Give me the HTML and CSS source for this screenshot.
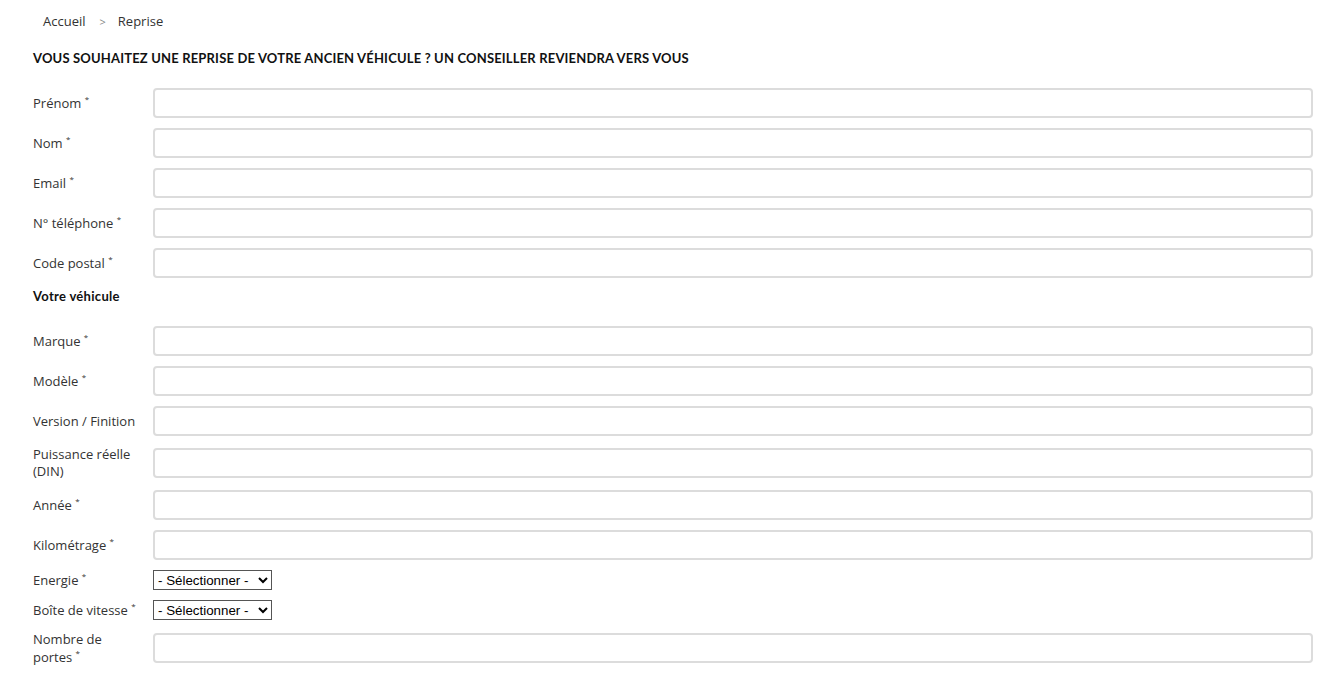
FILE: index.html
```html
<!DOCTYPE html>
<html>

<head>
    <meta charset="UTF-8">
    <meta name="viewport" content="width=device-width, initial-scale=1.0">
    <title>Reprise</title>
    <link rel="stylesheet" href="styles.css">
</head>

<body>
    <ul class="breadcrumb">
        <li><a href="#">Accueil</a></li>
        <li class="sep">&gt;</li>
        <li>Reprise</li>
    </ul>
    <form class="reprise">
        <h1>Vous souhaitez une reprise de votre ancien véhicule ? Un conseiller reviendra vers vous</h1>
        <div class="row"><label>Prénom <sup>*</sup></label><input type="text"></div>
        <div class="row"><label>Nom <sup>*</sup></label><input type="text"></div>
        <div class="row"><label>Email <sup>*</sup></label><input type="email"></div>
        <div class="row"><label>N° téléphone <sup>*</sup></label><input type="tel"></div>
        <div class="row"><label>Code postal <sup>*</sup></label><input type="text"></div>
        <h2>Votre véhicule</h2>
        <div class="row"><label>Marque <sup>*</sup></label><input type="text"></div>
        <div class="row"><label>Modèle <sup>*</sup></label><input type="text"></div>
        <div class="row"><label>Version / Finition</label><input type="text"></div>
        <div class="row"><label>Puissance réelle<br>(DIN)</label><input type="text"></div>
        <div class="row"><label>Année <sup>*</sup></label><input type="text"></div>
        <div class="row"><label>Kilométrage <sup>*</sup></label><input type="text"></div>
        <div class="row"><label>Energie <sup>*</sup></label>
            <select><option>- Sélectionner -</option></select></div>
        <div class="row"><label>Boîte de vitesse <sup>*</sup></label>
            <select><option>- Sélectionner -</option></select></div>
        <div class="row"><label class="tall">Nombre de<br>portes <sup>*</sup></label><input type="text"></div>
    </form>
</body>

</html>
```

FILE: styles.css
```css
* {
    margin: 0;
    padding: 0;
    box-sizing: border-box;
}

body {
    font-family: "Open Sans", "Liberation Sans", sans-serif;
    font-size: 13px;
    color: #333;
    background: white;
}

.breadcrumb {
    list-style-type: none;
    display: flex;
    padding: 13px 0 0 43px;
    line-height: 17px;
    height: 50px;
}

.breadcrumb a {
    color: #333;
    text-decoration: none;
}

.breadcrumb .sep {
    font-size: 11px;
    color: #888;
    padding: 0 12px 0 14px;
}

.reprise {
    padding: 0 31px 0 33px;
}

h1 {
    font-family: "Lato", "Liberation Sans", sans-serif;
    font-size: 13px;
    font-weight: bold;
    letter-spacing: 0.17px;
    text-transform: uppercase;
    color: #111;
    line-height: 17px;
    margin-bottom: 21px;
}

h2 {
    font-family: "Lato", "Liberation Sans", sans-serif;
    font-size: 13px;
    font-weight: bold;
    letter-spacing: 0.3px;
    color: #111;
    line-height: 17px;
    margin-bottom: 21px;
}

.row {
    display: flex;
    align-items: center;
    margin-bottom: 10px;
}

.row label {
    width: 120px;
    flex-shrink: 0;
    line-height: 17px;
    white-space: nowrap;
}

.row label.tall {
    line-height: 18px;
}

.row sup {
    font-size: 8px;
    vertical-align: 6px;
    line-height: 0;
}

.row input {
    flex: 1;
    height: 30px;
    border: 2px solid #dcdcdc;
    border-radius: 4px;
    background: white;
}

.row select {
    font-family: "Liberation Sans", Arial, sans-serif;
    font-size: 13.33px;
    height: 20px;
    width: 119px;
    border: 1px solid #555;
    border-radius: 0;
    color: #000;
    background: white;
}
```
